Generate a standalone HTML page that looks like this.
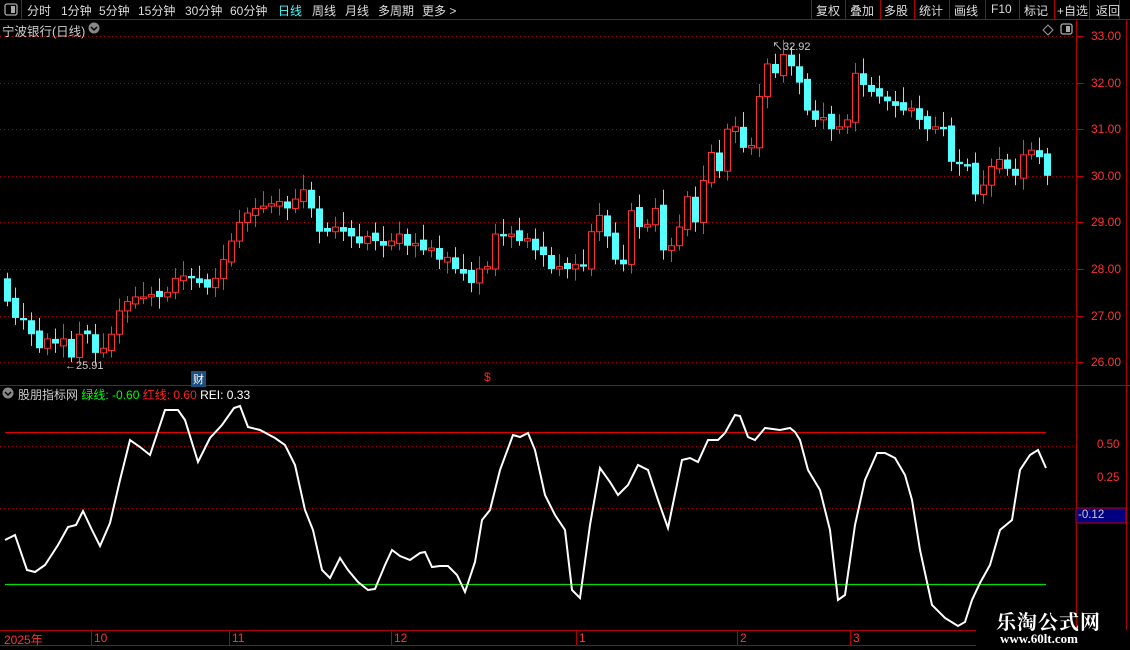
<!DOCTYPE html>
<html><head><meta charset="utf-8"><style>
*{margin:0;padding:0;box-sizing:border-box}
body{width:1130px;height:650px;background:#000;overflow:hidden;position:relative;font-family:"Liberation Sans","Noto Sans CJK SC",sans-serif;font-size:12px;color:#ccc}
.a{position:absolute;white-space:nowrap}
.t{position:absolute;top:2px;color:#ddd;font-size:12px;white-space:nowrap}
</style></head><body>
<svg class="a" style="left:0;top:0" width="1130" height="650" id="s">
<line x1="0" y1="19.5" x2="1130" y2="19.5" stroke="#b00000"/>
<line x1="21.5" y1="0" x2="21.5" y2="19" stroke="#b00000"/>
<rect x="5" y="4" width="12" height="11" rx="2" fill="none" stroke="#aaa" stroke-width="1.3"/>
<rect x="11" y="6" width="4" height="7" fill="#aaa"/>
<g stroke="#b00000">
<line x1="811.5" y1="0" x2="811.5" y2="19"/><line x1="845.5" y1="0" x2="845.5" y2="19"/><line x1="880.5" y1="0" x2="880.5" y2="19"/><line x1="914.5" y1="0" x2="914.5" y2="19"/><line x1="949.5" y1="0" x2="949.5" y2="19"/><line x1="985.5" y1="0" x2="985.5" y2="19"/><line x1="1019.5" y1="0" x2="1019.5" y2="19"/><line x1="1054.5" y1="0" x2="1054.5" y2="19"/><line x1="1089.5" y1="0" x2="1089.5" y2="19"/><line x1="1119.5" y1="0" x2="1119.5" y2="19"/>
</g>
<line x1="1076.5" y1="20" x2="1076.5" y2="630" stroke="#b00000"/>
<line x1="1126.5" y1="20" x2="1126.5" y2="630" stroke="#b00000"/>
<line x1="0" y1="385.5" x2="1130" y2="385.5" stroke="#b00000"/>
<line x1="0" y1="630.5" x2="976" y2="630.5" stroke="#b00000"/>
<line x1="0" y1="645.5" x2="976" y2="645.5" stroke="#b00000"/>
<g stroke="#b00000"><line x1="91.5" y1="630" x2="91.5" y2="645"/><line x1="229.5" y1="630" x2="229.5" y2="645"/><line x1="391.5" y1="630" x2="391.5" y2="645"/><line x1="576.5" y1="630" x2="576.5" y2="645"/><line x1="737.5" y1="630" x2="737.5" y2="645"/><line x1="850.5" y1="630" x2="850.5" y2="645"/></g>
<g id="grid" stroke="#a00000" stroke-dasharray="1,3"></g>
<g id="ticks" stroke="#c00000"></g>
<g id="cd"></g>
<line x1="0" y1="446.5" x2="1076" y2="446.5" stroke="#a00000" stroke-dasharray="1,3"/>
<line x1="0" y1="508.5" x2="1076" y2="508.5" stroke="#a00000" stroke-dasharray="1,3"/>
<line x1="5" y1="432.5" x2="1046" y2="432.5" stroke="#e00000" stroke-width="1.2"/>
<line x1="5" y1="584.5" x2="1046" y2="584.5" stroke="#00e000" stroke-width="1.2"/>
<polyline fill="none" stroke="#fff" stroke-width="2" points="5,540 15,535 27,570 35,572 45,565 58,545 68,527 76,525 83,511 92,530 100,546 110,523 120,480 130,440 140,447 150,455 165,410 178,410 185,420 198,462 210,438 222,425 234,408 240,406 248,427 260,430 275,438 285,445 295,465 305,510 313,530 322,570 330,578 340,558 348,570 358,582 368,590 375,589 385,565 392,550 400,556 410,560 420,553 425,552 432,567 440,566 448,566 457,575 465,592 475,562 482,520 490,510 500,470 513,435 520,437 528,433 535,450 545,495 555,515 565,530 572,590 580,598 590,525 600,468 610,482 618,495 628,485 638,465 648,470 658,500 668,528 682,460 690,458 698,462 708,440 718,440 725,433 735,415 740,416 748,437 755,440 765,428 780,430 790,428 795,432 800,440 808,470 820,490 830,530 838,600 845,595 855,525 865,480 877,453 885,453 895,458 905,475 912,500 920,550 932,605 945,618 958,626 965,622 972,600 980,583 990,565 1000,530 1012,520 1020,470 1030,455 1038,450 1046,468"/>
<rect x="1076" y="508" width="50" height="15" fill="#000080" stroke="#c00000"/>
<circle cx="8" cy="393" r="5.5" fill="#888"/><path d="M5 392l3 3 3-3" stroke="#000" stroke-width="1.5" fill="none"/>
<circle cx="94" cy="28" r="5.5" fill="#888"/><path d="M91 27l3 3 3-3" stroke="#000" stroke-width="1.5" fill="none"/>
<path d="M1048 25l5 5-5 5-5-5z" fill="none" stroke="#999"/>
<rect x="1061" y="24" width="11" height="10" rx="2" fill="none" stroke="#aaa" stroke-width="1.3"/><rect x="1066" y="26" width="4" height="6" fill="#aaa"/>
</svg>
<div class="t" style="left:27px">分时</div>
<div class="t" style="left:61px">1分钟</div>
<div class="t" style="left:99px">5分钟</div>
<div class="t" style="left:138px">15分钟</div>
<div class="t" style="left:185px">30分钟</div>
<div class="t" style="left:230px">60分钟</div>
<div class="t" style="left:278px;color:#4ff">日线</div>
<div class="t" style="left:312px">周线</div>
<div class="t" style="left:345px">月线</div>
<div class="t" style="left:378px">多周期</div>
<div class="t" style="left:422px">更多 &gt;</div>
<div class="t" style="left:816px">复权</div>
<div class="t" style="left:850px">叠加</div>
<div class="t" style="left:884px">多股</div>
<div class="t" style="left:919px">统计</div>
<div class="t" style="left:954px">画线</div>
<div class="t" style="left:991px">F10</div>
<div class="t" style="left:1024px">标记</div>
<div class="t" style="left:1057px">+自选</div>
<div class="t" style="left:1096px">返回</div>
<div class="a" style="left:2px;top:21px;color:#ccc;font-size:12.5px">宁波银行(日线)</div>
<div class="a" style="left:18px;top:386px;font-size:12px;color:#ccc">股朋指标网 <span style="color:#0f0">绿线: -0.60</span> <span style="color:#f22">红线: 0.60</span> <span style="color:#fff">REI: 0.33</span></div>
<div class="a" style="left:772px;top:38px;color:#ccc;font-size:11px">↖32.92</div>
<div class="a" style="left:65px;top:360px;color:#ccc;font-size:11px">←25.91</div>
<div class="a" style="left:191px;top:371px;background:#1a4f80;color:#fff;font-size:11px;padding:0 2px">财</div>
<div class="a" style="left:484px;top:370px;color:#f22;font-size:12px">$</div>
<div id="pl"></div>
<div class="a" style="left:1097px;top:439px;color:#f33;font-size:11.5px">0.50</div>
<div class="a" style="left:1097px;top:472px;color:#f33;font-size:11.5px">0.25</div>
<div class="a" style="left:1078px;top:509px;color:#ccc;font-size:11.5px">-0.12</div>
<div class="a" style="left:4px;top:631px;color:#f33;font-size:12px">2025年</div>
<div class="a" style="left:94px;top:631px;color:#f33;font-size:12px">10</div>
<div class="a" style="left:232px;top:631px;color:#f33;font-size:12px">11</div>
<div class="a" style="left:394px;top:631px;color:#f33;font-size:12px">12</div>
<div class="a" style="left:579px;top:631px;color:#f33;font-size:12px">1</div>
<div class="a" style="left:740px;top:631px;color:#f33;font-size:12px">2</div>
<div class="a" style="left:853px;top:631px;color:#f33;font-size:12px">3</div>
<div class="a" style="left:996px;top:606px;color:#fff;font-size:20px;font-weight:bold;font-family:'Noto Serif CJK SC',serif;letter-spacing:1px">乐淘公式网</div>
<div class="a" style="left:1000px;top:631px;color:#fff;font-size:13px;font-weight:bold;font-family:'Liberation Serif',serif">www.60lt.com</div>
<script>
var ns="http://www.w3.org/2000/svg";
function Y(p){return 36+(33-p)*46.6;}
function el(t,a,g){var e=document.createElementNS(ns,t);for(var k in a)e.setAttribute(k,a[k]);document.getElementById(g).appendChild(e);}
var pl=document.getElementById('pl'),h='';
for(var p=26;p<=33;p++){var y=Math.round(Y(p))+.5;el('line',{x1:0,y1:y,x2:1076,y2:y},'grid');el('line',{x1:1077,y1:y,x2:1084,y2:y},'ticks');
h+='<div class="a" style="left:1088px;top:'+(y-8)+'px;color:#f33;font-size:12px;width:33px;text-align:right">'+p+'.00</div>';}
pl.innerHTML=h;
var c=[27.3,26.95,26.9,26.6,26.3,26.5,26.4,26.5,26.1,26.6,26.6,26.2,26.3,26.6,27.1,27.3,27.4,27.4,27.45,27.4,27.5,27.8,27.85,27.8,27.7,27.6,27.8,28.2,28.6,29.0,29.2,29.3,29.35,29.4,29.45,29.3,29.5,29.7,29.3,28.8,28.8,28.9,28.8,28.7,28.55,28.7,28.6,28.5,28.6,28.75,28.5,28.55,28.4,28.45,28.2,28.25,28.0,27.9,27.7,28.0,28.05,28.75,28.7,28.75,28.6,28.65,28.4,28.3,28.0,28.05,28.0,28.1,28.05,28.8,29.15,28.7,28.2,28.1,29.25,28.9,28.95,29.3,28.4,28.5,28.9,29.55,29.0,29.9,30.5,30.1,31.0,31.05,30.6,30.65,31.7,32.4,32.2,32.6,32.35,32.0,31.4,31.2,31.25,31.0,31.05,31.2,32.2,31.95,31.8,31.7,31.6,31.5,31.4,31.45,31.2,31.0,31.05,31.0,30.3,30.25,30.2,29.6,29.8,30.2,30.35,30.15,30.0,30.45,30.55,30.4,30.0];
var prev=27.8;
for(var i=0;i<c.length;i++){var x=4+8*i,o=prev,cl=c[i];
 if(i%3==1)o=prev+(cl>prev?-0.05:0.08);
 var up=cl>=o,col=up?'#ff3232':'#54ffff';
 var hi=Math.max(o,cl)+0.12+((i*37)%5)*0.05,lo=Math.min(o,cl)-0.1-((i*13)%4)*0.05;
 el('line',{x1:x+3.5,y1:Y(hi),x2:x+3.5,y2:Y(lo),stroke:col},'cd');
 var t=Y(Math.max(o,cl)),b=Y(Math.min(o,cl));if(b-t<1.5)b=t+1.5;
 if(up)el('rect',{x:x+0.5,y:t,width:6,height:b-t,fill:'#000',stroke:col},'cd');
 else el('rect',{x:x,y:t,width:7,height:b-t,fill:col},'cd');
 prev=cl;}
</script>
</body></html>
